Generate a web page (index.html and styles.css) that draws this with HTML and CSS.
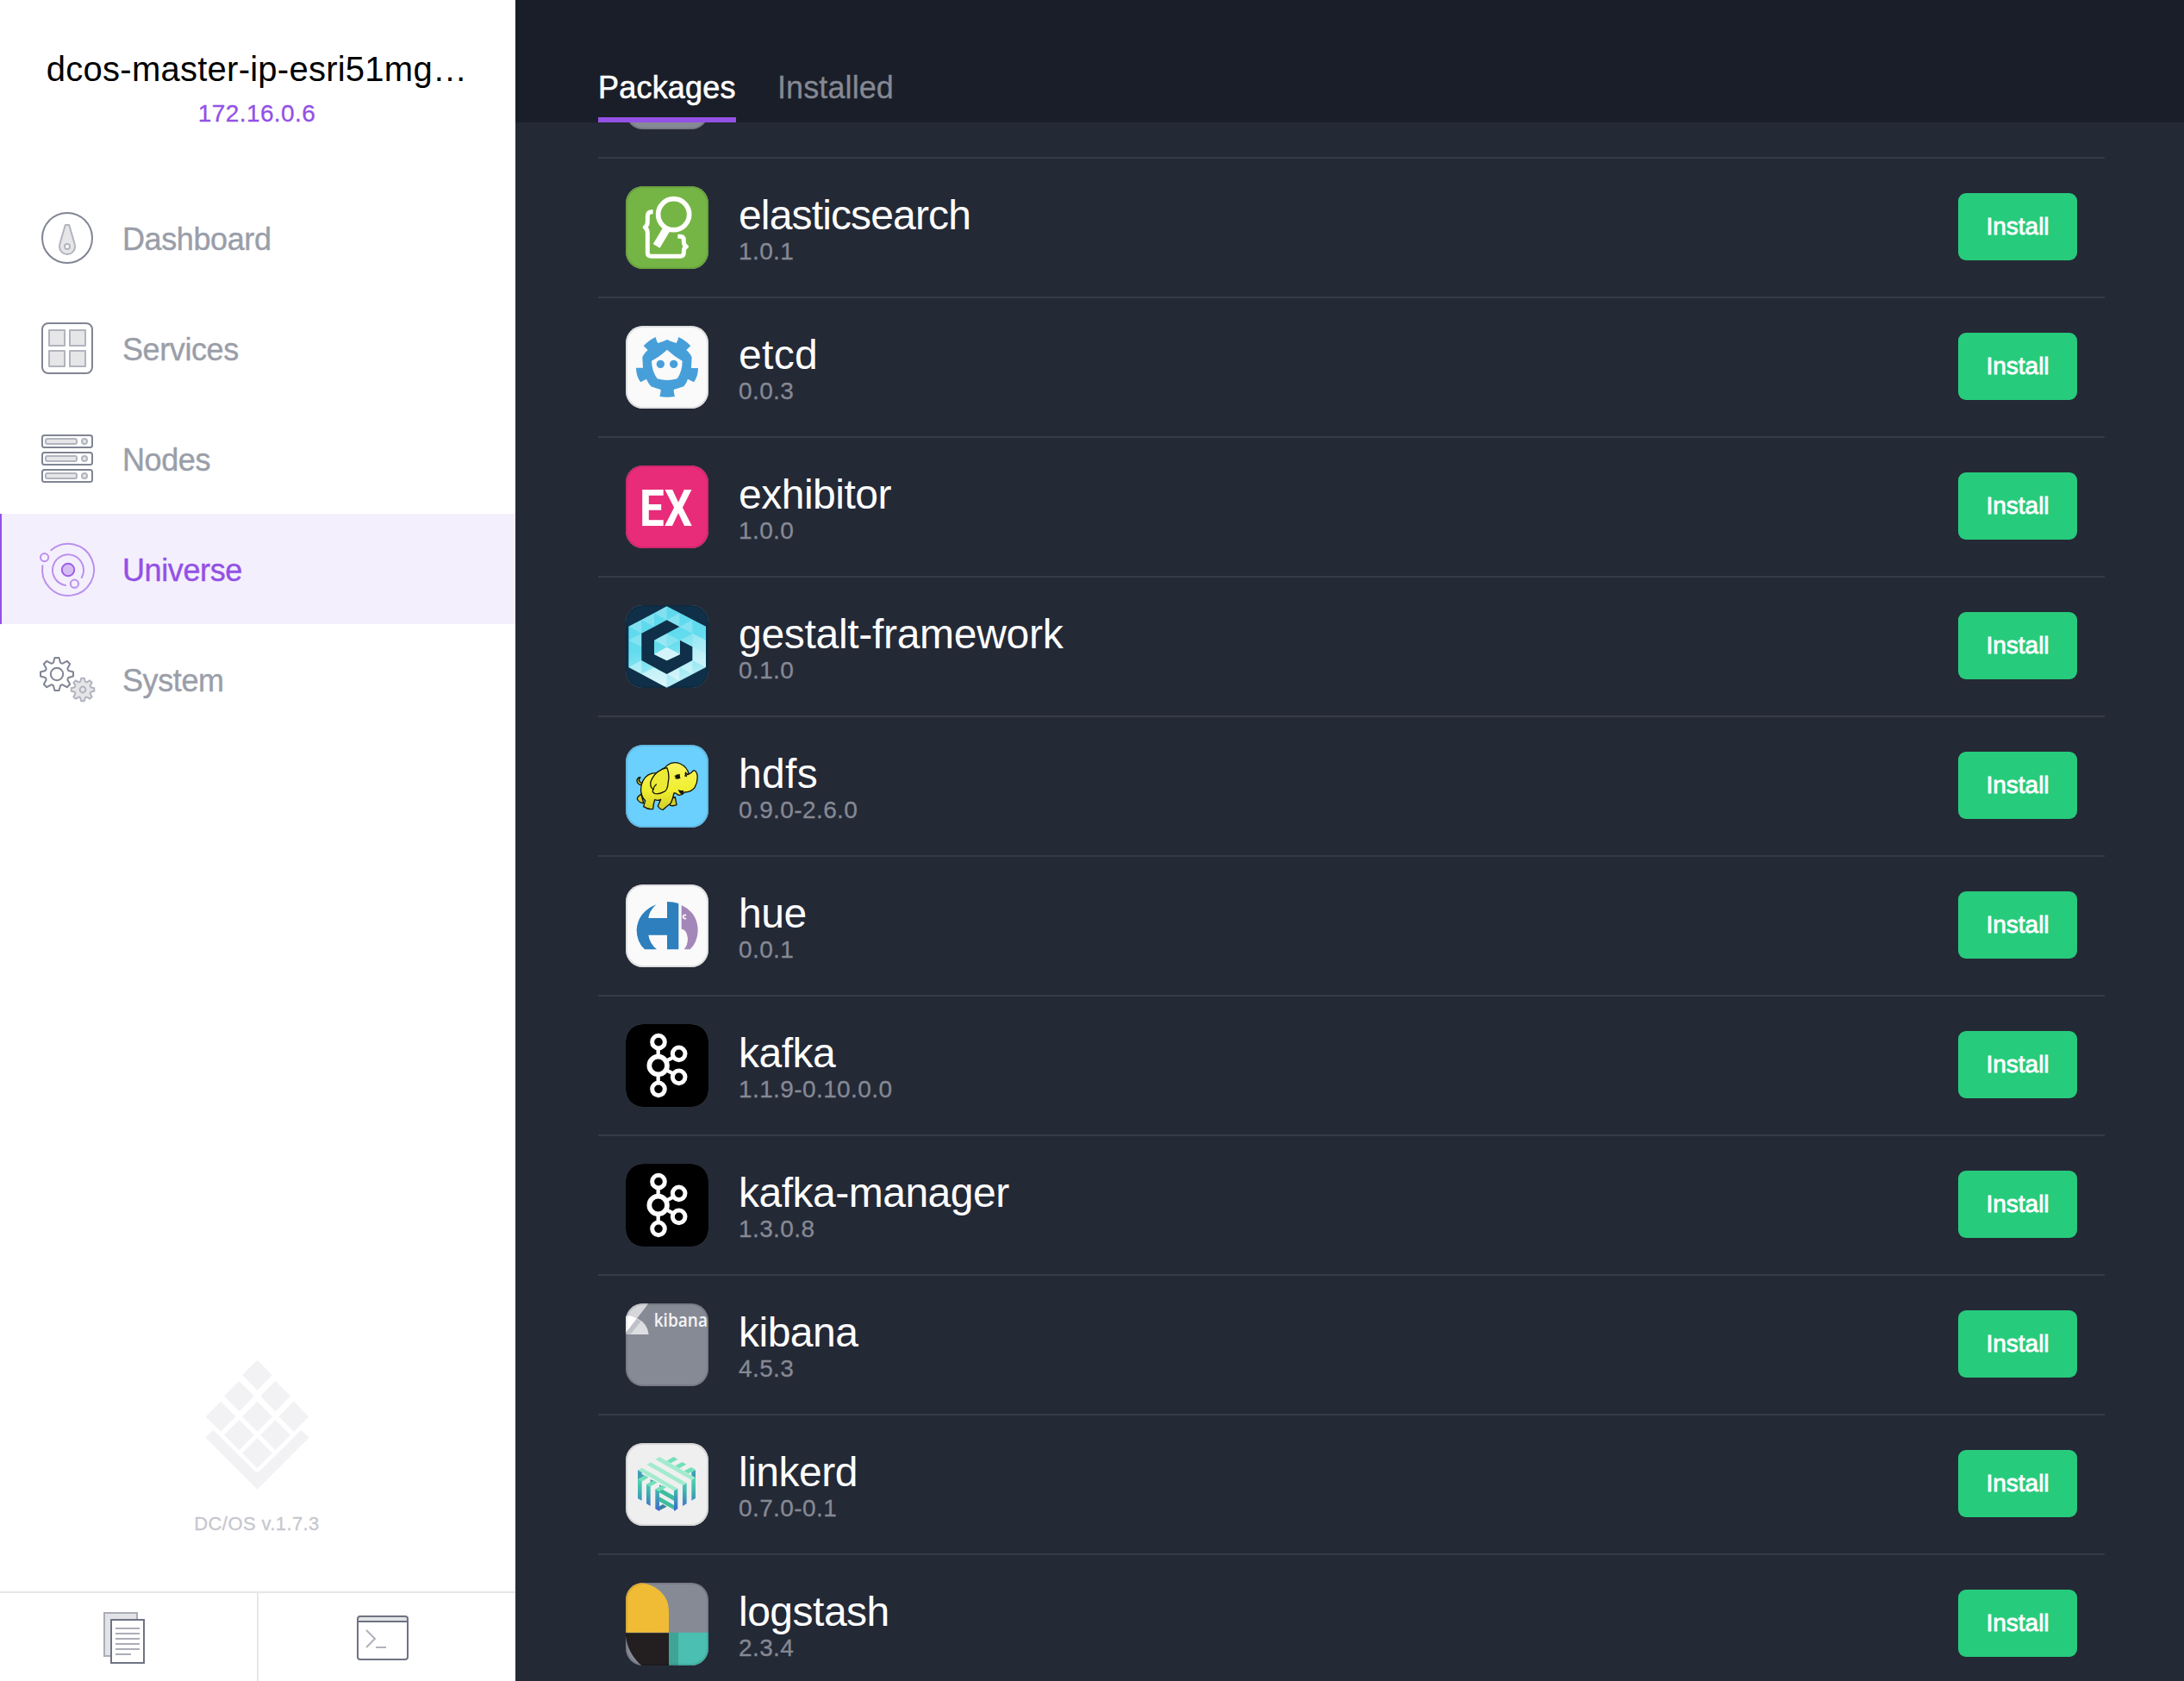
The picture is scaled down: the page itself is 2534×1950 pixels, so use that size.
FILE: index.html
```html
<!DOCTYPE html>
<html lang="en">
<head>
<meta charset="utf-8">
<title>DC/OS Universe</title>
<link rel="stylesheet" href="styles.css">
</head>
<body>
<svg class="defs" width="0" height="0" aria-hidden="true">
  <defs>
    <linearGradient id="gestalt-ring" x1="0" y1="0" x2=".25" y2="1">
      <stop offset="0" stop-color="#5cd6ec"/><stop offset=".55" stop-color="#62dcee"/><stop offset="1" stop-color="#b6eef7"/>
    </linearGradient>
    <linearGradient id="linkerd-bar" gradientUnits="userSpaceOnUse" x1="0" y1="115" x2="0" y2="235">
      <stop offset="0" stop-color="#4fdcae"/><stop offset=".45" stop-color="#41b3b0"/><stop offset="1" stop-color="#3f68cb"/>
    </linearGradient>
    <linearGradient id="elephant" x1="0" y1="0" x2="0" y2="1">
      <stop offset="0" stop-color="#f8f560"/><stop offset=".6" stop-color="#f0ee2e"/><stop offset="1" stop-color="#d2ce2c"/>
    </linearGradient>
    <symbol id="gear" viewBox="-20 -20 40 40" overflow="visible">
      <path vector-effect="non-scaling-stroke" d="M-4-13.5-2.5-19H2.5L4-13.5Q5.5-12 6.7-12.4L11.7-15.2 15.2-11.7 12.4-6.7Q12-5.5 13.5-4L19-2.5V2.5L13.5 4Q12 5.5 12.4 6.7L15.2 11.7 11.7 15.2 6.7 12.4Q5.5 12 4 13.5L2.5 19H-2.5L-4 13.5Q-5.5 12-6.7 12.4L-11.7 15.2-15.2 11.7-12.4 6.7Q-12 5.5-13.5 4L-19 2.5V-2.5L-13.5-4Q-12-5.5-12.4-6.7L-15.2-11.7-11.7-15.2-6.7-12.4Q-5.5-12-4-13.5Z"/>
    </symbol>
    <symbol id="kafka" viewBox="0 0 288 288">
      <rect width="288" height="288" fill="#000"/>
      <g fill="none" stroke="#fff" stroke-width="15">
        <path stroke-width="13" d="M113 85v25M113 180v25M142 128l24-13M142 160l24 13"/>
        <circle cx="113" cy="144" r="31" stroke-width="17"/>
        <circle cx="114" cy="62" r="22"/><circle cx="114" cy="226" r="22"/>
        <circle cx="185" cy="103" r="22"/><circle cx="185" cy="184" r="22"/>
      </g>
    </symbol>
  </defs>
</svg>
<div class="app">
  <aside class="sidebar">
    <header class="cluster">
      <h1 class="cluster-name">dcos-master-ip-esri51mg…</h1>
      <div class="cluster-ip">172.16.0.6</div>
    </header>
    <nav class="nav">
      <a class="nav-item">
        <svg class="nav-icon" viewBox="0 0 64 64"><circle class="line" cx="32" cy="32" r="29"/><path class="soft" d="M29.8 17h4.4l6.3 21.5Q41 40 41 42a9 9 0 0 1-18 0q0-2 .5-3.5z"/><circle class="soft hole" cx="32" cy="42" r="3"/></svg>
        <span class="nav-label">Dashboard</span>
      </a>
      <a class="nav-item">
        <svg class="nav-icon" viewBox="0 0 64 64"><rect class="line" x="3" y="3" width="58" height="58" rx="7"/><g class="soft"><rect x="11" y="11" width="18" height="18"/><rect x="35" y="11" width="18" height="18"/><rect x="11" y="35" width="18" height="18"/><rect x="35" y="35" width="18" height="18"/></g></svg>
        <span class="nav-label">Services</span>
      </a>
      <a class="nav-item">
        <svg class="nav-icon" viewBox="0 0 64 64"><g class="line"><rect x="3" y="5" width="58" height="14" rx="2.5"/><rect x="3" y="25" width="58" height="14" rx="2.5"/><rect x="3" y="45" width="58" height="14" rx="2.5"/></g><g class="soft"><rect x="7" y="9" width="36" height="6" rx="2"/><rect x="7" y="29" width="36" height="6" rx="2"/><rect x="7" y="49" width="36" height="6" rx="2"/><circle cx="52" cy="12" r="3"/><circle cx="52" cy="32" r="3"/><circle cx="52" cy="52" r="3"/></g></svg>
        <span class="nav-label">Nodes</span>
      </a>
      <a class="nav-item nav-item-active">
        <svg class="nav-icon" viewBox="0 0 64 64"><g class="orbit"><path d="M13.3 10.3A30 30 0 1 1 3.4 28.2M30 51A18 18 0 1 1 48.7 42"/><circle cx="5.6" cy="18.6" r="4.6"/><circle cx="40.4" cy="49.2" r="4.6"/></g><circle class="sun" cx="33" cy="33" r="7.2"/></svg>
        <span class="nav-label">Universe</span>
      </a>
      <a class="nav-item">
        <svg class="nav-icon" viewBox="0 0 64 64"><g class="line"><use href="#gear" x="0" y="6" width="40" height="40"/><circle cx="20" cy="26" r="7.2"/></g><g class="soft"><use href="#gear" x="36" y="30" width="28" height="28"/><circle cx="50" cy="44" r="3.4"/></g></svg>
        <span class="nav-label">System</span>
      </a>
    </nav>
    <div class="brand">
      <svg class="brand-logo" viewBox="113 112 362 452"><g><path id="tile" d="M294 114l52 52-52 53-52-53z"/><use href="#tile" x="-63" y="73"/><use href="#tile" x="63" y="73"/><use href="#tile" x="-127" y="144"/><use href="#tile" y="144"/><use href="#tile" x="127" y="144"/><use href="#tile" x="-63" y="208"/><use href="#tile" x="63" y="208"/><use href="#tile" y="271"/><path d="M114 383l27-26 144 142q9 8 18 0l144-142 27 26-180 180z"/></g></svg>
      <div class="brand-version">DC/OS v.1.7.3</div>
    </div>
    <footer class="tools">
      <a class="tool"><svg class="tool-icon" viewBox="0 0 60 60"><path d="M7 1h38v50H7z" fill="#e2e3e6" stroke="#abadb7"/><path d="M15 9h38v50H15z" fill="#fff" stroke="#6f7383"/><path d="M20 19h28M20 25h28M20 31h28M20 37h28M20 43h28M20 49h18" stroke="#abadb7"/></svg></a>
      <a class="tool"><svg class="tool-icon" viewBox="0 0 60 60"><rect x="1" y="5" width="58" height="50" rx="3" fill="#fff"/><path d="M2 6h56v5H2z" fill="#e2e3e6"/><path d="M1 11h58" stroke="#6f7383"/><rect x="1" y="5" width="58" height="50" rx="3" fill="none" stroke="#6f7383"/><path d="M11 21l10 10-10 10M22 41h12" fill="none" stroke="#b0b2bb"/></svg></a>
    </footer>
  </aside>

  <main class="page">
    <header class="tabs">
      <a class="tab tab-active">Packages</a>
      <a class="tab">Installed</a>
    </header>
    <div class="scroller">
      <ul class="packages">
        <li class="package"><div class="logo"></div></li>

        <li class="package">
          <div class="logo"><svg viewBox="0 0 288 288"><rect width="288" height="288" fill="#75b545"/><g fill="none" stroke="#fff" stroke-linejoin="round"><circle cx="167" cy="98" r="54" stroke-width="17"/><path stroke-width="27" d="M143 148l-36 60"/><path stroke-width="15" d="M95 89H90Q76 89 76 104V122Q76 137 67 143Q76 149 76 164V232Q76 244 90 244H190Q202 244 202 232V226Q202 215 211 210Q202 205 202 194V188Q202 175 190 175H181"/></g></svg></div>
          <div class="info"><div class="name name-tight">elasticsearch</div><div class="version">1.0.1</div></div>
          <button class="install">Install</button>
        </li>

        <li class="package">
          <div class="logo"><svg viewBox="0 0 288 288"><rect width="288" height="288" fill="#fafafa"/><path fill="#479fd9" d="M104 39Q80 50 62 70L77 84Q62 98 58 109L60 146H36Q36 175 52 196L72 185Q78 200 88 211L122 222Q122 236 118 246Q144 250 171 246Q167 236 167 222L202 211Q212 200 216 185L237 196Q252 175 252 147H228L230 109Q226 98 211 84L226 70Q208 50 184 39Q182 50 176 60Q160 56 144 48Q128 56 112 60Q106 50 104 39Z"/><path fill="#fafafa" d="M144 83Q168 106 197 122Q197 158 179 184Q144 194 110 184Q91 158 90 122Q120 106 144 83Z"/><circle cx="121" cy="133" r="14" fill="#479fd9"/><circle cx="167" cy="133" r="14" fill="#479fd9"/></svg></div>
          <div class="info"><div class="name name-wide">etcd</div><div class="version">0.0.3</div></div>
          <button class="install">Install</button>
        </li>

        <li class="package">
          <div class="logo"><svg viewBox="0 0 288 288"><rect width="288" height="288" fill="#e92c79"/><text class="logo-ex" x="48" y="211" textLength="184" lengthAdjust="spacingAndGlyphs">EX</text></svg></div>
          <div class="info"><div class="name">exhibitor</div><div class="version">1.0.0</div></div>
          <button class="install">Install</button>
        </li>

        <li class="package">
          <div class="logo"><svg viewBox="0 0 288 288"><rect width="288" height="288" fill="#0f3048"/><path fill="url(#gestalt-ring)" d="M143 4l136 70v142l-136 71L10 216V74z"/><g fill="#fff"><path opacity=".22" d="M99 28l44 24V4zM55 52l44 22V28zM10 74l45 24V52zM10 122l45-24v47zM143 52l44-24v47zM187 75l45-23v46zM189 122l43-24v47zM143 99l44 23-44 24z"/><path opacity=".35" d="M232 98l47 24-47 23zM232 145l47-23v47zM10 216l45-24v47zM99 122l44-23v47zM187 217l45-25v47z"/><path opacity=".45" d="M232 145l47 24-47 23zM232 192l47-23v47zM55 239l44-22v47zM99 217l44 23v47zM99 264v-47l44 70zM143 240l44-23v47z"/></g><path fill="#0f3048" d="M143 52L55 98v94l88 48 89-48v-47l-43-23v49l-46 22-44-22v-49l88-47z"/><path fill="#d5f4fa" d="M143 193l46-22-46-25-44 25z"/></svg></div>
          <div class="info"><div class="name name-long">gestalt-framework</div><div class="version">0.1.0</div></div>
          <button class="install">Install</button>
        </li>

        <li class="package">
          <div class="logo"><svg viewBox="0 0 288 288"><rect width="288" height="288" fill="#6bd0fd"/><g stroke="#15150a" stroke-width="4" stroke-linejoin="round" stroke-linecap="round"><path fill="#d6d32c" d="M55 141Q38 136 39 123Q42 112 51 113Q43 121 47 127Q52 131 56 134Z"/><path fill="#d2ce2c" d="M150 190L155 211Q166 214 177 209L172 182Z"/><path fill="#d6d32c" d="M54 172Q40 180 40 189Q48 203 62 203Z"/><path fill="url(#elephant)" d="M107 98Q74 98 60 125Q50 145 54 168Q58 186 68 194L62 215Q78 226 95 223Q96 206 101 191Q112 196 122 190L112 213Q120 226 130 226Q142 214 157 203Q164 188 168 168Q174 166 180 173Q192 180 205 165Q228 165 240 149Q252 128 249 105Q246 90 236 89Q228 99 220 102Q213 76 190 66Q164 56 145 71Q136 82 128 84Z"/><path fill="#ecea34" d="M144 80Q153 104 148 128Q146 160 132 164Q118 172 102 170Q90 166 96 155Q84 148 87 128Q96 106 112 94Q128 82 144 80Z"/><path fill="none" d="M96 155Q98 144 106 138M209 96Q206 103 211 110M206 108L218 102"/></g><path fill="#15150a" d="M182 155Q192 161 202 158L199 172Q188 174 182 155Z"/><ellipse cx="181" cy="111" rx="8" ry="8" fill="#15150a"/><path stroke="#15150a" stroke-width="4" d="M170 108l20 8M173 118l15-15M207 98l12 6"/></svg></div>
          <div class="info"><div class="name name-wide">hdfs</div><div class="version">0.9.0-2.6.0</div></div>
          <button class="install">Install</button>
        </li>

        <li class="package">
          <div class="logo"><svg viewBox="0 0 288 288"><rect width="288" height="288" fill="#fafafa"/><path fill="#2d7fbd" d="M106 70Q42 96 38 158Q38 200 66 226H108Q84 206 79 176H144V226H184V66Q166 60 144 60V117H79Q82 92 106 70Z"/><path fill="#a487b9" d="M194 72Q252 100 251 162Q250 200 224 226H203Q216 210 216 188Q212 156 194 155Z"/><path fill="none" stroke="#fafafa" stroke-width="5" d="M210 108a6 6 0 1 0 0 9"/></svg></div>
          <div class="info"><div class="name">hue</div><div class="version">0.0.1</div></div>
          <button class="install">Install</button>
        </li>

        <li class="package">
          <div class="logo"><svg viewBox="0 0 288 288"><use href="#kafka"/></svg></div>
          <div class="info"><div class="name">kafka</div><div class="version">1.1.9-0.10.0.0</div></div>
          <button class="install">Install</button>
        </li>

        <li class="package">
          <div class="logo"><svg viewBox="0 0 288 288"><use href="#kafka"/></svg></div>
          <div class="info"><div class="name">kafka-manager</div><div class="version">1.3.0.8</div></div>
          <button class="install">Install</button>
        </li>

        <li class="package">
          <div class="logo"><svg viewBox="0 0 288 288"><path fill="#d6d7db" d="M0 0H79L0 104Z"/><path fill="#dddee1" d="M0 42Q22 42 40 52Q76 70 80 108H0Z"/><path fill="#fff" d="M0 42Q22 42 38 53L0 103Z"/><path fill="#bfc1c8" d="M38 53L53 63L16 108H0V103Z"/><text class="logo-kibana" x="98" y="80" textLength="187" lengthAdjust="spacingAndGlyphs">kibana</text></svg></div>
          <div class="info"><div class="name">kibana</div><div class="version">4.5.3</div></div>
          <button class="install">Install</button>
        </li>

        <li class="package">
          <div class="logo"><svg viewBox="0 0 288 288"><rect width="288" height="288" fill="#efefef"/><path fill="#3f9fb2" d="M42 94l14 7v25l-14 7zM243 93l-14 8v24l14 8zM56 108l12 7-12 7zM86 126l14 7-14 8zM117 145l14 7-14 8z"/><path fill="#3dbd9f" d="M117 155l51 29v17l-51-29zM117 187l51 29v16l-51-29z"/><path fill="#3a7f9f" d="M117 220l12-7 14 8-26 14z"/><path fill="url(#linkerd-bar)" d="M42 126l14 7v67l-14-7zM72 143l14 8v68l-14-8zM103 160l14 8v69l-14-8zM181 158l-13 8v71l13-8zM212 139l-14 8v72l14-8zM243 121l-14 8v71l14-8z"/><path fill="#72e0bb" d="M142 62l25-14 14 8-24 14zM172 79l25-13 14 8-24 14zM203 97l25-13 15 9-25 13zM42 126l25-14 13 7-24 15zM72 143l25-13 13 7-24 14zM103 160l25-13 13 7-24 14z"/><path fill="#a3ebcf" d="M42 94l14-8 125 72-13 8zM73 75l14-8 125 72-14 8zM103 56l15-8 125 73-14 8z"/></svg></div>
          <div class="info"><div class="name">linkerd</div><div class="version">0.7.0-0.1</div></div>
          <button class="install">Install</button>
        </li>

        <li class="package">
          <div class="logo"><svg viewBox="0 0 288 288"><path fill="#f0bc36" d="M0 0H54Q94 4 124 34Q150 60 150 97V173H0Z"/><path fill="#231f20" d="M0 175H150V288H54Q6 244 0 184Z"/><path fill="#3fa496" d="M150 173h33v115h-33z"/><path fill="#4abfb2" d="M183 173h105v115H183z"/></svg></div>
          <div class="info"><div class="name">logstash</div><div class="version">2.3.4</div></div>
          <button class="install">Install</button>
        </li>
      </ul>
    </div>
  </main>
</div>
</body>
</html>
```
FILE: styles.css
```css
* { box-sizing: border-box; }

body {
  margin: 0;
  font-family: "Liberation Sans", Arial, sans-serif;
  background: #242936;
}

.defs { display: block; width: 0; height: 0; }

.app { display: flex; height: 1950px; overflow: hidden; }

/* Sidebar */
.sidebar {
  flex: 0 0 598px;
  display: flex;
  flex-direction: column;
  background: #fff;
}

.cluster { height: 212px; padding: 56px 2px 0 0; text-align: center; }

.cluster-name {
  margin: 0;
  font-size: 40px;
  line-height: 48px;
  font-weight: 400;
  letter-spacing: .25px;
  white-space: nowrap;
  color: #000;
}

.cluster-ip {
  margin-top: 12px;
  font-size: 28px;
  line-height: 32px;
  letter-spacing: .4px;
  color: #9351e5;
  -webkit-text-stroke: .3px currentColor;
}

.nav { flex: 1; }

.nav-item {
  display: flex;
  align-items: center;
  gap: 32px;
  height: 128px;
  padding-left: 44px;
  border-left: 2px solid transparent;
  color: #9a9ea9;
}

.nav-item-active {
  background: #f4effd;
  border-color: #9351e5;
  color: #9351e5;
}

.nav-icon { width: 64px; height: 64px; overflow: visible; stroke-width: 2; stroke-linejoin: round; }
.nav-icon .line { fill: none; stroke: #808594; }
.nav-icon .soft { fill: #e6e6e9; stroke: #b1b4be; }
.nav-icon .hole { fill: #fff; }
.nav-icon .orbit { fill: none; stroke: #ba90ee; stroke-linecap: round; }
.nav-icon .sun { fill: #d5bdf3; stroke: #9c60e6; }

.nav-label {
  padding-top: 3px;
  font-size: 36px;
  line-height: 40px;
  letter-spacing: -.4px;
  -webkit-text-stroke: .4px currentColor;
}

.brand {
  display: flex;
  flex-direction: column;
  align-items: center;
  gap: 28px;
  padding: 0 2px 66px 0;
}

.brand-logo { width: 121px; height: 151px; fill: #f2f2f4; }

.brand-version {
  font-size: 22px;
  line-height: 24px;
  letter-spacing: .4px;
  color: #c6c7cd;
  -webkit-text-stroke: .3px currentColor;
}

.tools {
  display: grid;
  grid-template-columns: 300px 298px;
  height: 104px;
  border-top: 2px solid #e6e6e6;
}

.tool { display: flex; justify-content: center; padding: 22px 10px 0 0; }
.tool:first-child { border-right: 2px solid #e6e6e6; }
.tool-icon { width: 60px; height: 60px; stroke-width: 2; }

/* Main page */
.page { flex: 1; display: flex; flex-direction: column; min-width: 0; }

.tabs {
  display: flex;
  align-items: flex-end;
  gap: 48px;
  flex: 0 0 142px;
  padding-left: 96px;
  background: #1a1e28;
}

.tab {
  padding-bottom: 14px;
  border-bottom: 6px solid transparent;
  font-size: 36px;
  line-height: 40px;
  letter-spacing: .1px;
  color: #858994;
  -webkit-text-stroke: .3px currentColor;
}

.tab-active {
  width: 160px;
  letter-spacing: .2px;
  white-space: nowrap;
  color: #fff;
  border-color: #9351e5;
  -webkit-text-stroke: .6px #fff;
}

.scroller { flex: 1; overflow: hidden; padding: 0 92px 0 96px; }

/* The list is scrolled down so that its first visible row is cut by the tab bar. */
.packages { margin: -122px 0 0; padding: 0; list-style: none; }

.package {
  display: flex;
  align-items: flex-start;
  height: 162px;
  padding: 32px 32px 0;
  border-top: 2px solid #363b49;
}

.logo {
  position: relative;
  flex: 0 0 96px;
  height: 96px;
  border-radius: 20px;
  overflow: hidden;
  background: #868a95;
}

.logo svg { display: block; width: 96px; height: 96px; }

.logo::after {
  content: "";
  position: absolute;
  inset: 0;
  border-radius: 20px;
  box-shadow: inset 0 0 0 2px rgba(0, 0, 0, .1);
}

.logo-ex { font: 700 177px Roboto, sans-serif; fill: #fff; }
.logo-kibana { font: 600 64px "Open Sans", sans-serif; fill: #f3f4f6; }

.info { flex: 1; padding: 8px 0 0 35px; }

.name {
  font-size: 48px;
  line-height: 52px;
  letter-spacing: -.5px;
  color: #fff;
}

.name-tight { letter-spacing: -.85px; }
.name-long { letter-spacing: -.3px; }
.name-wide { letter-spacing: .3px; }

.version {
  margin-top: 0;
  font-size: 28px;
  line-height: 32px;
  letter-spacing: .4px;
  color: #858994;
  -webkit-text-stroke: .3px currentColor;
}

.install {
  width: 138px;
  height: 78px;
  margin-top: 8px;
  padding: 0 0 1px;
  border: 0;
  border-radius: 9px;
  background: #27cb7c;
  color: #fff;
  font: 28px/32px "Liberation Sans", Arial, sans-serif;
  -webkit-text-stroke: .8px #fff;
}
```
